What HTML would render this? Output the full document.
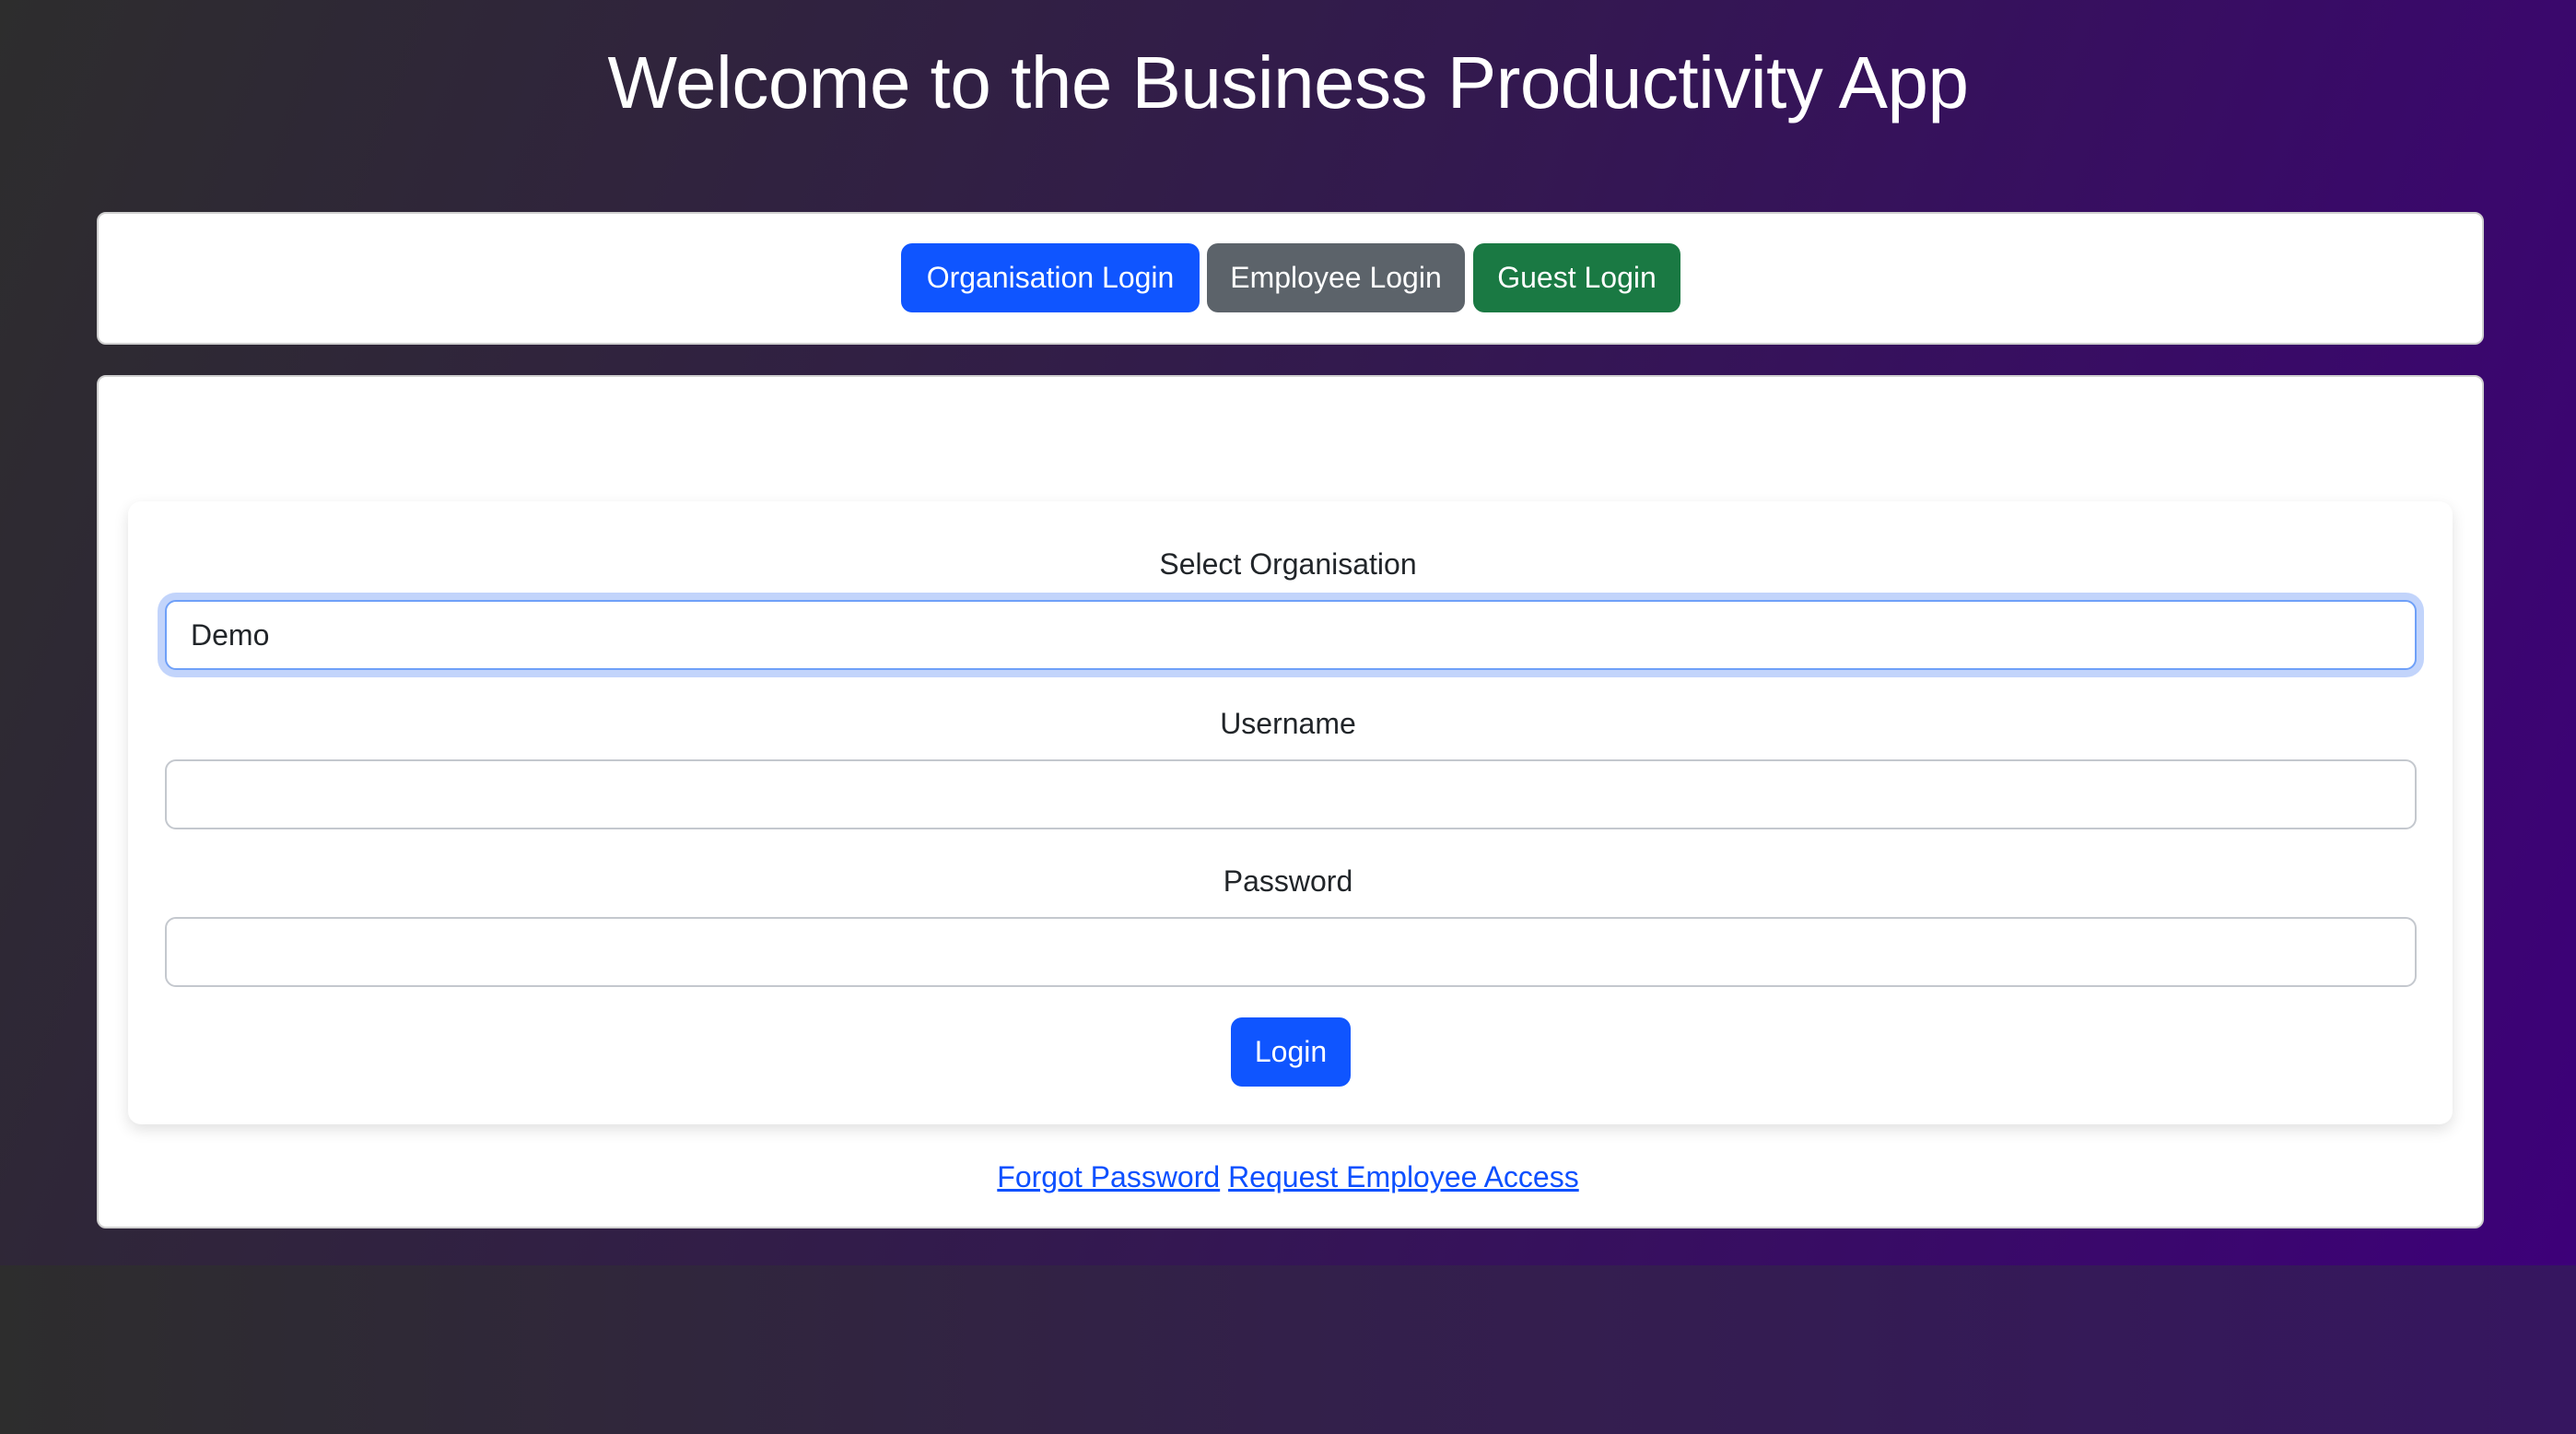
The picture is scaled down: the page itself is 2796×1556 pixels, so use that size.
<!DOCTYPE html>
<html><head><meta charset="utf-8"><style>
*{box-sizing:border-box;margin:0;padding:0}
html,body{width:2796px;height:1556px;overflow:hidden;font-family:"Liberation Sans",sans-serif}
body{background:linear-gradient(90deg,#2d2d2d 0%,#33204a 50%,#361660 100%)}
.top{position:absolute;left:0;top:0;width:2796px;height:1373px;background:linear-gradient(110deg,#2d2d2d 0%,#33194f 50%,#3d0079 100%)}
h1{position:absolute;left:0;width:2796px;top:40px;text-align:center;color:#fff;font-weight:normal;font-size:80px;letter-spacing:-0.5px;line-height:100px}
.card{position:absolute;left:105px;width:2591px;background:#fff;border:2px solid #d0d0d0;border-radius:10px}
.btn{position:absolute;color:#fff;font-size:32px;line-height:75px;text-align:center;border-radius:12px;height:75px}
.inner{position:absolute;left:139px;top:544px;width:2523px;height:676px;background:#fff;border-radius:14px;box-shadow:0 6px 16px rgba(0,0,0,.12)}
.lbl{position:absolute;left:0;width:2796px;text-align:center;font-size:32px;color:#212529;line-height:40px}
.inp{position:absolute;left:179px;width:2444px;height:76px;border:2px solid #c4c8ce;border-radius:12px;background:#fff}
a{color:#0d50ff;text-decoration:underline}
</style></head><body>
<div class="top"></div>
<h1>Welcome to the Business Productivity App</h1>
<div class="card" style="top:230px;height:144px"></div>
<div class="btn" style="left:978px;top:264px;width:324px;background:#0f55ff">Organisation Login</div>
<div class="btn" style="left:1310px;top:264px;width:280px;background:#5c636a">Employee Login</div>
<div class="btn" style="left:1599px;top:264px;width:225px;background:#1a7943">Guest Login</div>
<div class="card" style="top:407px;height:926px"></div>
<div class="inner"></div>
<div class="lbl" style="top:592px">Select Organisation</div>
<div class="inp" style="top:651px;border-color:#6fa0f8;box-shadow:0 0 0 8px #c2d4fb"><span style="position:absolute;left:26px;top:16px;font-size:32px;color:#212529;line-height:40px">Demo</span></div>
<div class="lbl" style="top:765px">Username</div>
<div class="inp" style="top:824px"></div>
<div class="lbl" style="top:936px">Password</div>
<div class="inp" style="top:995px"></div>
<div class="btn" style="left:1336px;top:1104px;width:130px;background:#0f55ff">Login</div>
<div class="lbl" style="top:1257px"><a>Forgot Password</a> <a>Request Employee Access</a></div>
</body></html>
